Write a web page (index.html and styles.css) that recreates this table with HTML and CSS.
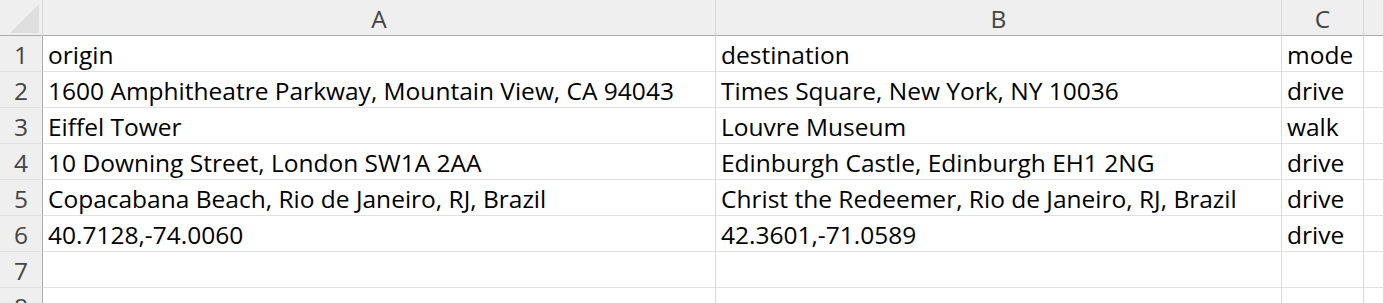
FILE: index.html
```html
<!DOCTYPE html>
<html>
<head>
<meta charset="utf-8">
<link rel="stylesheet" href="styles.css">
</head>
<body>
<div class="sheet">
  <div class="corner"><div class="tri"></div></div>
  <div class="colhead">A</div>
  <div class="colhead">B</div>
  <div class="colhead">C</div>
  <div class="colhead"></div>

  <div class="rowhead">1</div>
  <div class="cell">origin</div>
  <div class="cell">destination</div>
  <div class="cell">mode</div>
  <div class="cell"></div>

  <div class="rowhead">2</div>
  <div class="cell">1600 Amphitheatre Parkway, Mountain View, CA 94043</div>
  <div class="cell">Times Square, New York, NY 10036</div>
  <div class="cell">drive</div>
  <div class="cell"></div>

  <div class="rowhead">3</div>
  <div class="cell">Eiffel Tower</div>
  <div class="cell">Louvre Museum</div>
  <div class="cell">walk</div>
  <div class="cell"></div>

  <div class="rowhead">4</div>
  <div class="cell">10 Downing Street, London SW1A 2AA</div>
  <div class="cell">Edinburgh Castle, Edinburgh EH1 2NG</div>
  <div class="cell">drive</div>
  <div class="cell"></div>

  <div class="rowhead">5</div>
  <div class="cell">Copacabana Beach, Rio de Janeiro, RJ, Brazil</div>
  <div class="cell">Christ the Redeemer, Rio de Janeiro, RJ, Brazil</div>
  <div class="cell">drive</div>
  <div class="cell"></div>

  <div class="rowhead">6</div>
  <div class="cell">40.7128,-74.0060</div>
  <div class="cell">42.3601,-71.0589</div>
  <div class="cell">drive</div>
  <div class="cell"></div>

  <div class="rowhead">7</div>
  <div class="cell"></div>
  <div class="cell"></div>
  <div class="cell"></div>
  <div class="cell"></div>

  <div class="rowhead last">8</div>
  <div class="cell"></div>
  <div class="cell"></div>
  <div class="cell"></div>
  <div class="cell"></div>
</div>
</body>
</html>
```
FILE: styles.css
```css
html, body {
  margin: 0;
  padding: 0;
  background: #ffffff;
  overflow: hidden;
  height: 303px;
}
.sheet {
  display: grid;
  grid-template-columns: 43px 673px 566px 82px 20px;
  grid-auto-rows: 36px;
  font-family: "Open Sans", "Liberation Sans", sans-serif;
  font-size: 24.5px;
  line-height: 32px;
  color: #000;
}
.sheet > div {
  box-sizing: border-box;
  border-right: 1px solid #dadada;
  border-bottom: 1px solid #e1e1e1;
  white-space: nowrap;
  overflow: hidden;
}
.corner {
  background: #efefef;
  border-bottom: 1px solid #ababab !important;
  border-right: 1px solid #dadada !important;
  padding: 4px 0 0 10px;
}
.tri {
  width: 29px;
  height: 29px;
  background: #dfdfdf;
  clip-path: polygon(100% 0, 100% 100%, 0 100%);
}
.colhead {
  background: #efefef;
  border-bottom: 1px solid #ababab !important;
  color: #444;
  text-align: center;
  padding-top: 3px;
}
.rowhead {
  background: #efefef;
  border-right: 1px solid #ababab !important;
  color: #444;
  text-align: center;
  padding-top: 3px;
}
.cell {
  padding: 3px 0 0 5px;
}
```
